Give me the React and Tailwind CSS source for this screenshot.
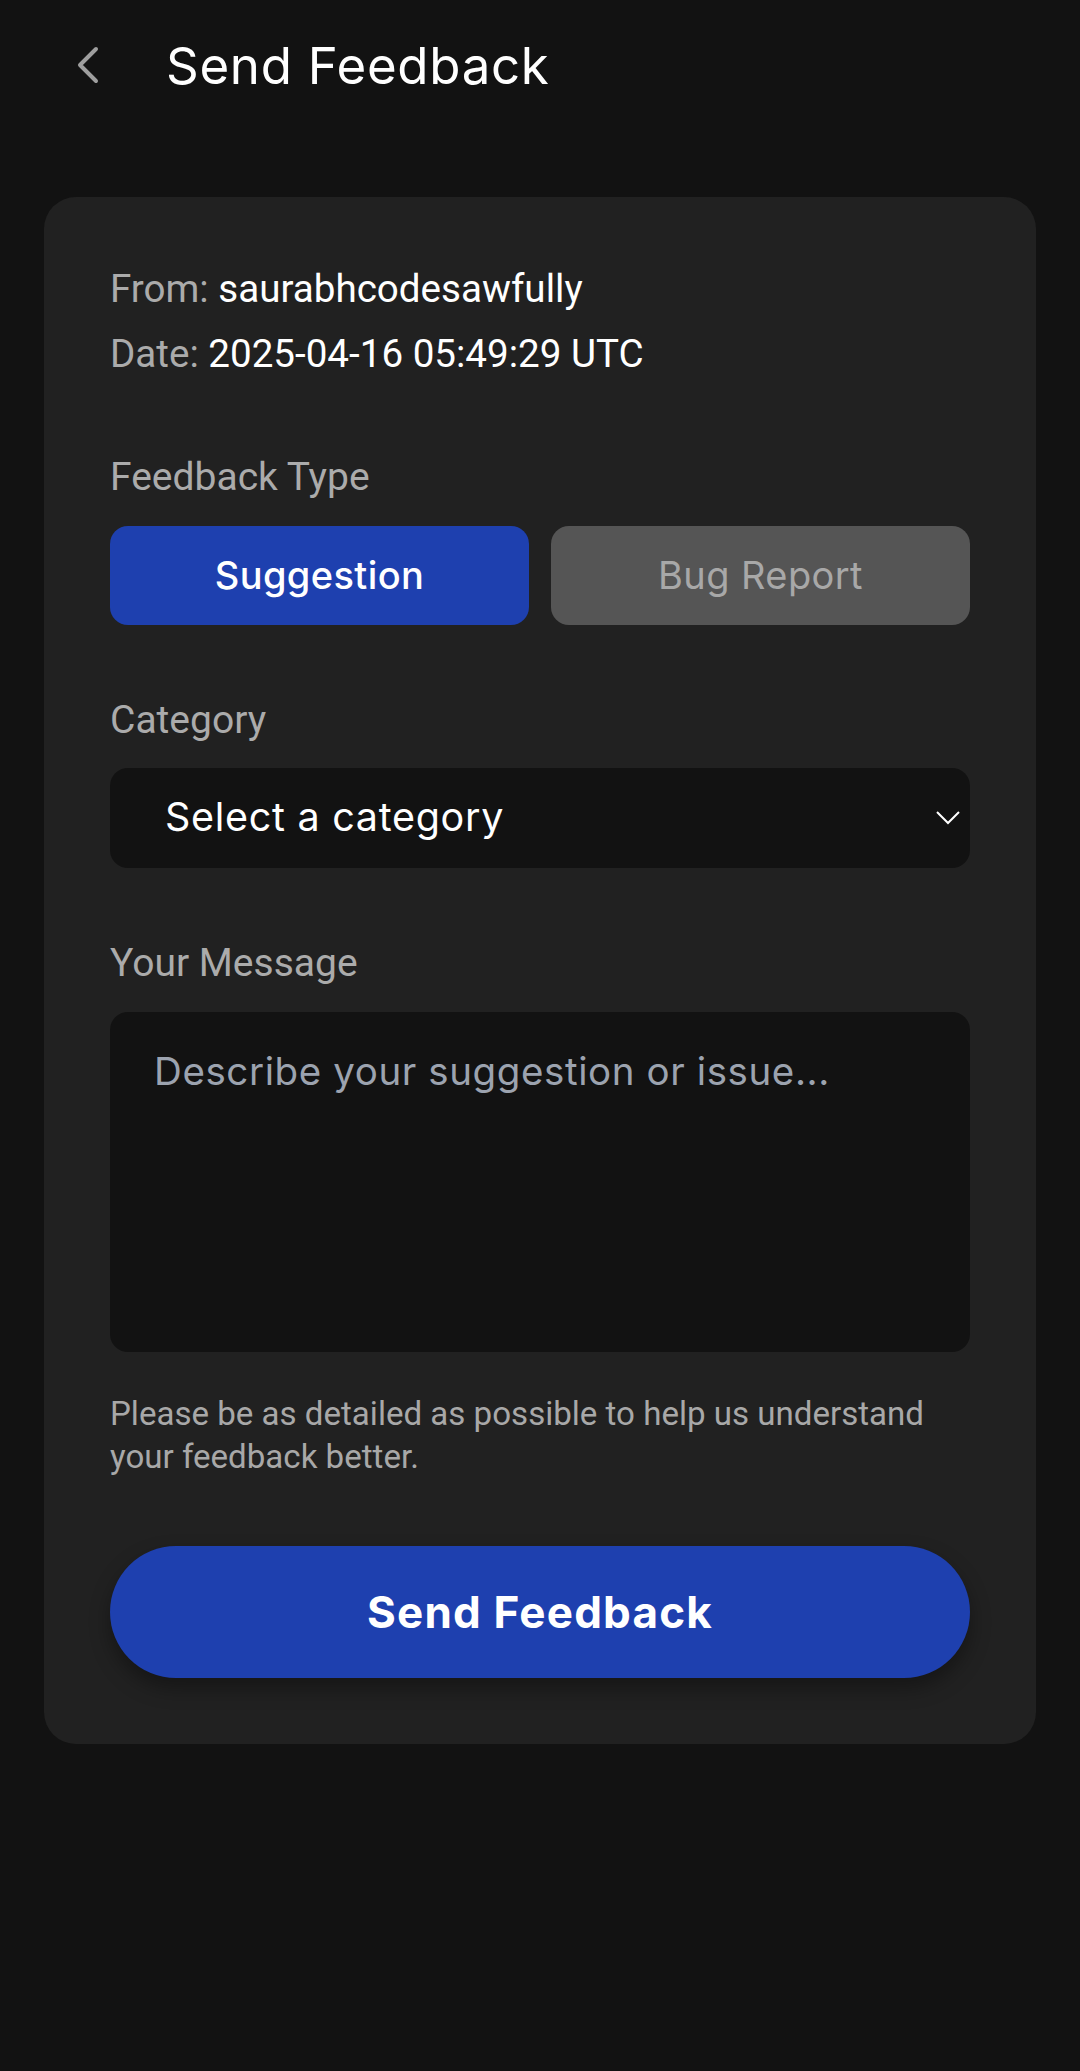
import React, { useState } from 'react'

const sans = "font-['Inter','Open_Sans',sans-serif]"
const roboto = "font-['Roboto','Liberation_Sans',sans-serif]"

const BackIcon = () => (
  <svg width="24" height="38" viewBox="0 0 24 38" fill="none">
    <path d="M20 3 L4 19 L20 35" stroke="#9e9e9e" strokeWidth="4" strokeLinecap="round" strokeLinejoin="round" />
  </svg>
)

const ChevronDown = () => (
  <svg width="24" height="14" viewBox="0 0 24 14" fill="none">
    <path d="M1 1 L12 12 L23 1" stroke="#ffffff" strokeWidth="2" />
  </svg>
)

const Label = ({ children }) => (
  <div className={`${roboto} text-[39px] leading-[56px] text-[#ababab]`}>{children}</div>
)

const App = () => {
  const [type, setType] = useState('suggestion')
  const [message, setMessage] = useState('')

  return (
    <div className="min-h-[2071px] w-full bg-[#121212]">
      {/* header */}
      <div className="flex h-[130px] items-center">
        <div className="ml-[76px] flex w-[90px] items-center">
          <BackIcon />
        </div>
        <h1 className={`${sans} text-[51px] font-normal leading-none tracking-[0.7px] text-white`}>Send Feedback</h1>
      </div>

      <div className="mx-[44px] mt-[67px] rounded-[32px] bg-[#212121] px-[66px] pb-[66px] pt-[64px]">
        {/* meta */}
        <div className={`${roboto} text-[38.6px] leading-[56px]`}>
          <div>
            <span className="text-[#ababab]">From: </span>
            <span className="text-white">saurabhcodesawfully</span>
          </div>
          <div className="mt-[9px]">
            <span className="text-[#ababab]">Date: </span>
            <span className="text-white">2025-04-16 05:49:29 UTC</span>
          </div>
        </div>

        {/* feedback type */}
        <div className="mt-[67px]">
          <Label>Feedback Type</Label>
          <div className="mt-[21px] grid grid-cols-2 gap-[22px]">
            <button
              onClick={() => setType('suggestion')}
              className={`${sans} h-[99px] rounded-[18px] text-[38px] font-medium tracking-[0.4px] ${
                type === 'suggestion' ? 'bg-[#1e40af] text-white' : 'bg-[#555555] text-[#a8a8a8]'
              }`}
            >
              Suggestion
            </button>
            <button
              onClick={() => setType('bug')}
              className={`${sans} h-[99px] rounded-[18px] text-[38px] font-normal tracking-[0.4px] ${
                type === 'bug' ? 'bg-[#1e40af] text-white' : 'bg-[#555555] text-[#a8a8a8]'
              }`}
            >
              Bug Report
            </button>
          </div>
        </div>

        {/* category */}
        <div className="mt-[67px]">
          <Label>Category</Label>
          <button className="mt-[20px] flex h-[100px] w-full items-center justify-between rounded-[18px] bg-[#121212] pl-[55px] pr-[10px]">
            <span className={`${sans} text-[39.5px] font-normal tracking-[0.7px] text-white`}>Select a category</span>
            <ChevronDown />
          </button>
        </div>

        {/* message */}
        <div className="mt-[67px]">
          <Label>Your Message</Label>
          <textarea
            value={message}
            onChange={(e) => setMessage(e.target.value)}
            placeholder="Describe your suggestion or issue..."
            className={`${sans} mt-[21px] block h-[340px] w-full resize-none rounded-[18px] bg-[#121212] px-[44px] pt-[31px] text-[38.5px] leading-[56px] tracking-[0.6px] text-white outline-none placeholder:text-[#9ca3af]`}
          />
          <p className={`${roboto} mt-[40px] text-[33.1px] leading-[43px] text-[#a8a8a8]`}>
            Please be as detailed as possible to help us understand your feedback better.
          </p>
        </div>

        <button className={`${sans} mt-[68px] flex h-[132px] w-full items-center justify-center rounded-full bg-[#1e40af] text-[44px] font-bold tracking-[1.2px] text-white shadow-[0_10px_20px_rgba(0,0,0,0.35)]`}>
          Send Feedback
        </button>
      </div>
    </div>
  )
}

export default App
